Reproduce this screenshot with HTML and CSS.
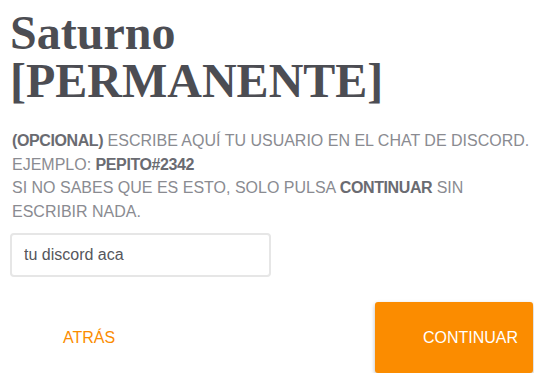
FILE: index.html
```html
<!DOCTYPE html>
<html lang="es">
<head>
<meta charset="utf-8">
<title>Saturno</title>
<link rel="stylesheet" href="styles.css">
</head>
<body>
<main class="page">
  <h1 class="title">Saturno<br>[PERMANENTE]</h1>
  <p class="info"><b>(OPCIONAL)</b> ESCRIBE AQUÍ TU USUARIO EN EL CHAT DE DISCORD.<br>EJEMPLO: <b>PEPITO#2342</b><br>SI NO SABES QUE ES ESTO, SOLO PULSA <b>CONTINUAR</b> SIN ESCRIBIR NADA.</p>
  <input class="field" type="text" value="tu discord aca">
  <div class="actions">
    <button class="btn btn-flat" type="button">ATRÁS</button>
    <button class="btn btn-raised" type="button">CONTINUAR</button>
  </div>
</main>
</body>
</html>
```

FILE: styles.css
```css
html, body {
  margin: 0;
  padding: 0;
  background: #ffffff;
}

.page {
  width: 523px;
  padding: 9px 0 0 10px;
  font-family: "Liberation Sans", Arial, sans-serif;
  display: flex;
  flex-direction: column;
}

.title {
  margin: 0;
  font-family: "Liberation Serif", "Times New Roman", serif;
  font-weight: bold;
  font-size: 48px;
  line-height: 48px;
  color: #4c4d53;
}

.info {
  margin: 24px 0 0 2px;
  width: 524px;
  font-size: 16px;
  line-height: 23.5px;
  color: #8a8b91;
}

.info b {
  color: #6a6b71;
  font-weight: bold;
  letter-spacing: -0.4px;
}

.field {
  margin: 10px 0 0 0;
  box-sizing: border-box;
  width: 261px;
  height: 44px;
  border: 2px solid #e6e6e6;
  border-radius: 4px;
  padding: 0 12px;
  font-family: "Liberation Sans", Arial, sans-serif;
  font-size: 16px;
  color: #55565c;
  outline: none;
}

.actions {
  margin-top: 25px;
  display: flex;
  justify-content: space-between;
  align-items: center;
}

.btn {
  box-sizing: border-box;
  width: 158px;
  height: 71px;
  border: none;
  border-radius: 3px;
  font-family: "Liberation Sans", Arial, sans-serif;
  font-size: 16px;
  cursor: pointer;
}

.btn-flat {
  background: transparent;
  color: #fb8c00;
  text-align: center;
}

.btn-raised {
  background: #fb8c00;
  color: #ffffff;
  text-align: right;
  padding: 0 15px 0 0;
  box-shadow: 0 2px 4px rgba(0, 0, 0, 0.28);
}
```
